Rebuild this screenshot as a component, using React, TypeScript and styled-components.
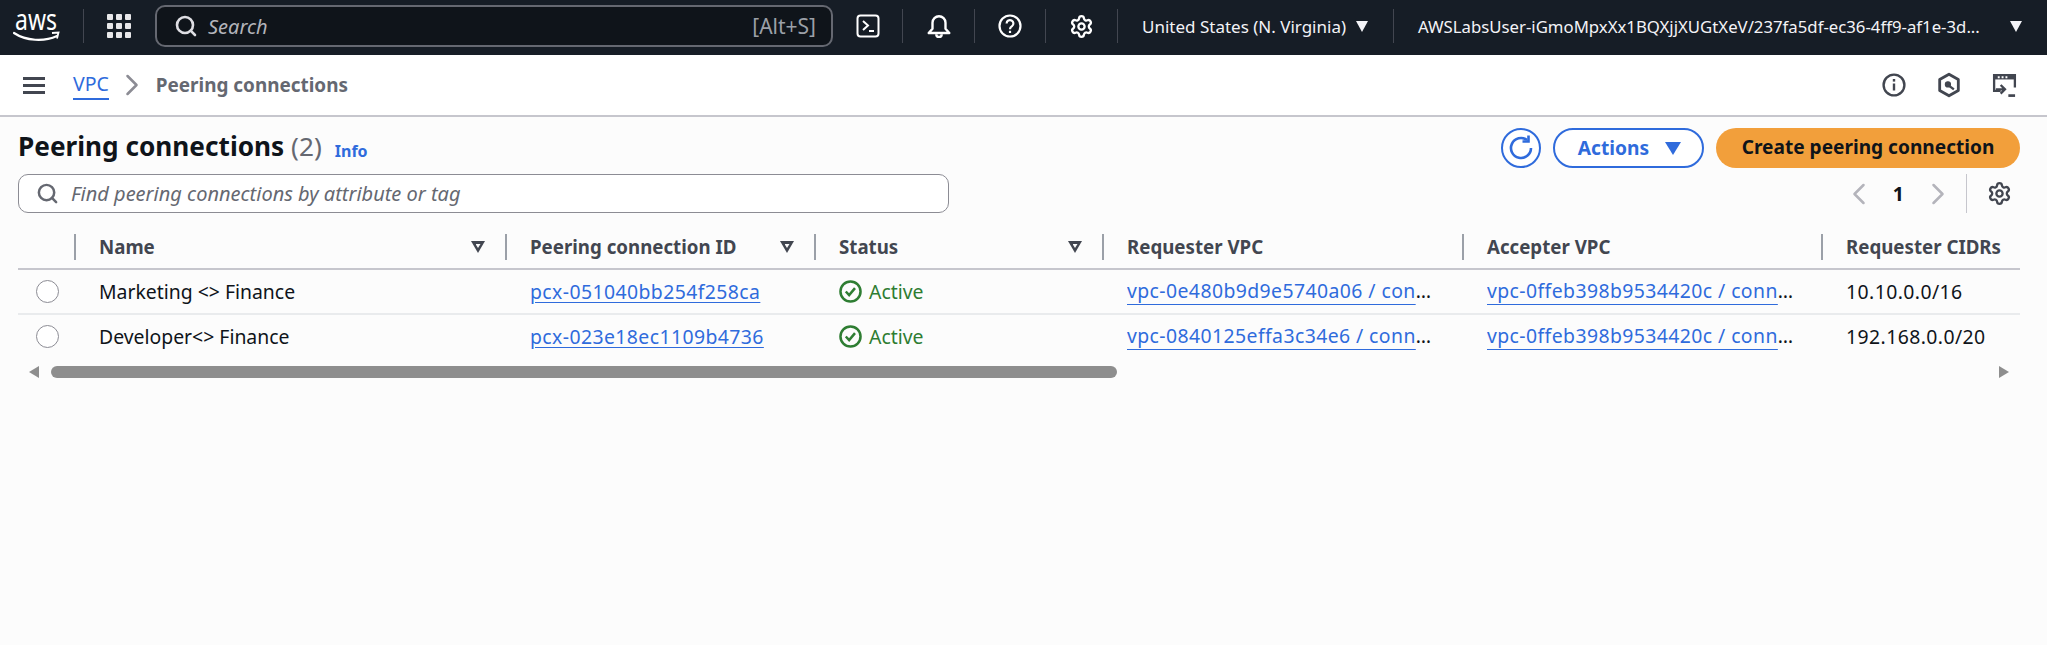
import React from "react";
import styled, { createGlobalStyle } from "styled-components";
import { ChevronLeft, ChevronRight, Search, Settings } from "lucide-react";

const FONT = `"Noto Sans", "Open Sans", Arial, sans-serif`;

const GlobalStyle = createGlobalStyle`
  html, body {
    margin: 0;
    height: 645px;
    overflow: hidden;
    background: #fcfcfc;
    font-family: ${FONT};
    color: #0f141a;
  }
  * { box-sizing: border-box; }
`;

interface Connection {
  name: string;
  id: string;
  requester: string;
  accepter: string;
  cidr: string;
}

const connections: Connection[] = [
  {
    name: "Marketing <> Finance",
    id: "pcx-051040bb254f258ca",
    requester: "vpc-0e480b9d9e5740a06 / connection-requester",
    accepter: "vpc-0ffeb398b9534420c / connection-accepter",
    cidr: "10.10.0.0/16",
  },
  {
    name: "Developer<> Finance",
    id: "pcx-023e18ec1109b4736",
    requester: "vpc-0840125effa3c34e6 / connection-requester",
    accepter: "vpc-0ffeb398b9534420c / connection-accepter",
    cidr: "192.168.0.0/20",
  },
];

const COLUMNS = "56px 431px 309px 288px 360px 359px 199px";

export default function App() {
  return (
    <>
      <GlobalStyle />
      <TopNav>
        <Logo>
          <svg width="48" height="30" viewBox="0 0 48 30">
            <text
              x="2"
              y="13"
              transform="scale(1 1.3)"
              fontFamily="Noto Sans, sans-serif"
              fontSize="23"
              fill="#fff"
            >
              aws
            </text>
            <path d="M1 20c12 8 30 9 43 3" fill="none" stroke="#fff" strokeWidth="2.2" strokeLinecap="round" />
            <path d="M39 20l6.500-.5-1.500 6" fill="none" stroke="#fff" strokeWidth="1.800" />
          </svg>
        </Logo>
        <NavDivider />
        <GridIcon>
          {Array.from({ length: 9 }).map((_, i) => (
            <i key={i} />
          ))}
        </GridIcon>
        <SearchBox>
          <Search size={24} strokeWidth={2.6} color="#dedee3" />
          <SearchText>Search</SearchText>
          <Shortcut>[Alt+S]</Shortcut>
        </SearchBox>
        <IconSlot $width={69}>
          <svg width="24" height="24" viewBox="0 0 24 24" fill="none" stroke="#fff" strokeWidth="2">
            <rect x="1.500" y="1.500" width="21" height="21" rx="3" />
            <path d="M7 7l5 4.500-5 4.500M13 17h5" />
          </svg>
        </IconSlot>
        <NavDivider />
        <IconSlot $width={71}>
          <svg width="26" height="26" viewBox="0 0 24 24" fill="none" stroke="#fff" strokeWidth="2.2" strokeLinejoin="round">
            <path d="M2.500 18.500h19l-3.500-4V9a6 6 0 0 0-12 0v5.500z" />
            <path d="M9.500 19.500a2.500 2.500 0 0 0 5 0" />
          </svg>
        </IconSlot>
        <NavDivider />
        <IconSlot $width={70}>
          <svg width="24" height="24" viewBox="0 0 24 24" fill="none" stroke="#fff" strokeWidth="2.2">
            <circle cx="12" cy="12" r="10.500" />
            <path d="M8.600 9.400a3.400 3.400 0 1 1 5.400 2.800c-1.200.8-2 1.400-2 3" />
            <path d="M12 16.800v2.200" />
          </svg>
        </IconSlot>
        <NavDivider />
        <IconSlot $width={71}>
          <Settings size={25} strokeWidth={2.2} color="#fff" />
        </IconSlot>
        <NavDivider />
        <NavMenu $width={275} $size={17}>
          United States (N. Virginia)
          <NavCaret />
        </NavMenu>
        <NavDivider />
        <NavMenu $width={653} $size={16.75}>
          AWSLabsUser-iGmoMpxXx1BQXjjXUGtXeV/237fa5df-ec36-4ff9-af1e-3d...
          <NavCaret />
        </NavMenu>
      </TopNav>

      <CrumbBar>
        <Burger>
          <i />
          <i />
          <i />
        </Burger>
        <CrumbLink>VPC</CrumbLink>
        <ChevronRight size={36} strokeWidth={1.7} color="#8c8c94" />
        <CrumbCurrent>Peering connections</CrumbCurrent>
        <CrumbTools>
          <svg width="24" height="24" viewBox="0 0 24 24" fill="none" stroke="#424650" strokeWidth="2.400">
            <circle cx="12" cy="12" r="10.400" />
            <path d="M12 10.500v7" />
            <path d="M12 6v2.600" />
          </svg>
          <svg width="26" height="26" viewBox="0 0 24 24" fill="none" stroke="#424650" strokeWidth="2.600">
            <path d="M12 2l8.600 5v10L12 22l-8.600-5V7z" strokeLinejoin="round" />
            <circle cx="11" cy="11.500" r="2.400" fill="#424650" strokeWidth="1" />
            <path d="M12.500 13l4 3" strokeWidth="2.200" />
          </svg>
          <svg width="25" height="25" viewBox="0 0 26 26" fill="none" stroke="#424650" strokeWidth="2.400">
            <path d="M9 18.500H2.200V2.200h21.600v13" />
            <path d="M2 4.500h22" strokeWidth="4.400" />
            <path d="M9 12.500l4.500 4.500L9 21.500M4 17h9" />
            <path d="M17 23.500h7" strokeWidth="2.800" />
            <path d="M6 4.500h2M10 4.500h2M14 4.500h2" stroke="#fff" strokeWidth="2" />
          </svg>
        </CrumbTools>
      </CrumbBar>

      <Page>
        <TitleRow>
          <Title>
            Peering connections <Count>(2)</Count>
            <InfoLink>Info</InfoLink>
          </Title>
          <Actions>
            <RefreshButton>
              <svg width="28" height="28" viewBox="0 0 28 28" fill="none" stroke="#2f6bdc" strokeWidth="2.600">
                <path d="M24 14a10 10 0 1 1-4-8" />
                <path d="M21.500 1.500v6h-6" />
              </svg>
            </RefreshButton>
            <OutlineButton>
              Actions
              <ButtonCaret />
            </OutlineButton>
            <PrimaryButton>Create peering connection</PrimaryButton>
          </Actions>
        </TitleRow>

        <FilterRow>
          <FilterBox>
            <Search size={23} strokeWidth={2.6} color="#656871" />
            <FilterText>Find peering connections by attribute or tag</FilterText>
          </FilterBox>
          <Pager>
            <ChevronLeft size={36} strokeWidth={1.7} color="#b4b4bb" />
            <PageNumber>1</PageNumber>
            <ChevronRight size={36} strokeWidth={1.7} color="#b4b4bb" />
            <PagerDivider />
            <Settings size={25} strokeWidth={2.2} color="#424650" />
          </Pager>
        </FilterRow>

        <HeaderRow>
          <HeaderCell />
          <HeaderCell $bar>
            Name
            <SortIcon />
          </HeaderCell>
          <HeaderCell $bar>
            Peering connection ID
            <SortIcon />
          </HeaderCell>
          <HeaderCell $bar>
            Status
            <SortIcon />
          </HeaderCell>
          <HeaderCell $bar>Requester VPC</HeaderCell>
          <HeaderCell $bar>Accepter VPC</HeaderCell>
          <HeaderCell $bar>Requester CIDRs</HeaderCell>
        </HeaderRow>

        {connections.map((c, i) => (
          <Row key={c.id} $last={i === connections.length - 1}>
            <RadioCell>
              <Radio />
            </RadioCell>
            <Cell>{c.name}</Cell>
            <Cell $wide>
              <TableLink>{c.id}</TableLink>
            </Cell>
            <Cell>
              <StatusOk>
                <svg width="23" height="23" viewBox="0 0 22 22" fill="none" stroke="#2e7d32" strokeWidth="2.400">
                  <circle cx="11" cy="11" r="9.600" />
                  <path d="M6.500 11l3.200 3.400 5.600-6.600" />
                </svg>
                Active
              </StatusOk>
            </Cell>
            <Cell $wide>
              <Clip>
                <TableLink $offset={6}>{c.requester}</TableLink>
              </Clip>
            </Cell>
            <Cell $wide>
              <Clip>
                <TableLink $offset={6}>{c.accepter}</TableLink>
              </Clip>
            </Cell>
            <Cell $wide>{c.cidr}</Cell>
          </Row>
        ))}

        <ScrollTrack>
          <ArrowLeft />
          <ScrollThumb style={{ width: 1066 }} />
          <ArrowRight />
        </ScrollTrack>
      </Page>
    </>
  );
}

const TopNav = styled.header`
  display: flex;
  align-items: center;
  height: 55px;
  padding: 0 0 3px 13px;
  background: #161d26;
  color: #fff;
`;

const Logo = styled.div`
  width: 70px;
  height: 30px;
  margin-top: 3px;
  flex-shrink: 0;
`;

const NavDivider = styled.span`
  width: 1px;
  height: 34px;
  background: #424650;
  flex-shrink: 0;
`;

const GridIcon = styled.div`
  display: grid;
  grid-template-columns: repeat(3, 6px);
  grid-auto-rows: 6px;
  gap: 3px;
  margin: 0 24px 0 23px;
  flex-shrink: 0;
  > i {
    background: #e8e8ea;
    border-radius: 1px;
  }
`;

const SearchBox = styled.div`
  display: flex;
  align-items: center;
  width: 678px;
  height: 42px;
  padding: 0 15px 0 17px;
  background: #0f141a;
  border: 2px solid #656871;
  border-radius: 10px;
  flex-shrink: 0;
`;

const SearchText = styled.span`
  margin-left: 10px;
  font-size: 20px;
  font-style: italic;
  color: #b4b4bb;
`;

const Shortcut = styled.span`
  margin-left: auto;
  font-size: 21px;
  color: #9ba0a8;
`;

const IconSlot = styled.div<{ $width: number }>`
  display: flex;
  align-items: center;
  justify-content: center;
  width: ${({ $width }) => $width}px;
  flex-shrink: 0;
`;

const NavMenu = styled.div<{ $width: number; $size: number }>`
  display: flex;
  align-items: center;
  width: ${({ $width }) => $width}px;
  padding: 0 25px 0 24px;
  font-size: ${({ $size }) => $size}px;
  white-space: nowrap;
  color: #f3f3f7;
  flex-shrink: 0;
`;

const NavCaret = styled.span`
  width: 0;
  height: 0;
  margin-left: auto;
  border-left: 6px solid transparent;
  border-right: 6px solid transparent;
  border-top: 11px solid #f3f3f7;
`;

const CrumbBar = styled.nav`
  display: flex;
  align-items: center;
  height: 62px;
  padding: 0 30px 0 23px;
  background: #fff;
  border-bottom: 2px solid #c6c6cd;
`;

const Burger = styled.div`
  display: flex;
  flex-direction: column;
  justify-content: space-between;
  width: 22px;
  height: 17px;
  margin-right: 28px;
  > i {
    height: 3px;
    background: #424650;
  }
`;

const CrumbLink = styled.a`
  margin-right: 5px;
  padding-bottom: 1px;
  border-bottom: 2px solid #2f6bdc;
  font-size: 19.5px;
  color: #2f6bdc;
`;

const CrumbCurrent = styled.span`
  margin-left: 6px;
  font-size: 18.9px;
  font-weight: 700;
  color: #656871;
`;

const CrumbTools = styled.div`
  display: flex;
  align-items: center;
  gap: 30px;
  margin-left: auto;
`;

const Page = styled.main`
  padding: 11px 27px 0 18px;
`;

const TitleRow = styled.div`
  display: flex;
  align-items: center;
  justify-content: space-between;
  height: 40px;
`;

const Title = styled.h1`
  margin: 0;
  font-size: 26.2px;
  font-weight: 700;
  line-height: 40px;
  white-space: nowrap;
`;

const Count = styled.span`
  font-weight: 400;
  color: #656871;
`;

const InfoLink = styled.a`
  position: relative;
  top: 1px;
  margin-left: 13px;
  font-size: 16px;
  font-weight: 700;
  color: #2f6bdc;
`;

const Actions = styled.div`
  display: flex;
  align-items: center;
  gap: 12px;
`;

const RefreshButton = styled.button`
  display: flex;
  align-items: center;
  justify-content: center;
  width: 40px;
  height: 40px;
  padding: 0;
  background: #fff;
  border: 2.5px solid #2f6bdc;
  border-radius: 50%;
`;

const OutlineButton = styled.button`
  display: flex;
  align-items: center;
  justify-content: center;
  gap: 16px;
  width: 151px;
  height: 40px;
  padding: 0 0 2px 2px;
  background: #fff;
  border: 2.5px solid #2f6bdc;
  border-radius: 20px;
  font-family: ${FONT};
  font-size: 19.2px;
  font-weight: 700;
  color: #2f6bdc;
`;

const ButtonCaret = styled.span`
  width: 0;
  height: 0;
  margin-top: 2px;
  border-left: 8px solid transparent;
  border-right: 8px solid transparent;
  border-top: 13px solid #2f6bdc;
`;

const PrimaryButton = styled.button`
  width: 304px;
  height: 40px;
  padding: 0 0 2px;
  background: #f29f3b;
  border: 0;
  border-radius: 20px;
  font-family: ${FONT};
  font-size: 19.1px;
  font-weight: 700;
  color: #0f141a;
`;

const FilterRow = styled.div`
  display: flex;
  align-items: center;
  justify-content: space-between;
  margin-top: 6px;
`;

const FilterBox = styled.div`
  display: flex;
  align-items: center;
  width: 931px;
  height: 39px;
  padding-left: 17px;
  background: #fff;
  border: 1px solid #8c8c94;
  border-radius: 10px;
`;

const FilterText = styled.span`
  margin-left: 12px;
  font-size: 20px;
  font-style: italic;
  color: #656871;
`;

const Pager = styled.div`
  display: flex;
  align-items: center;
  height: 39px;
  margin-right: 8px;
`;

const PageNumber = styled.span`
  margin: 0 16px;
  font-size: 19.5px;
  font-weight: 700;
`;

const PagerDivider = styled.span`
  width: 1px;
  height: 39px;
  margin: 0 20px 0 10px;
  background: #c6c6cd;
`;

const HeaderRow = styled.div`
  display: grid;
  grid-template-columns: ${COLUMNS};
  height: 36px;
  margin-top: 21px;
  border-bottom: 2px solid #c6c6cd;
`;

const HeaderCell = styled.div<{ $bar?: boolean }>`
  display: flex;
  align-items: center;
  justify-content: space-between;
  height: 26px;
  padding: 0 20px 2px 25px;
  font-size: 18.7px;
  font-weight: 700;
  white-space: nowrap;
  color: #424650;
  ${({ $bar }) => ($bar ? "border-left: 2.5px solid #9ba0a8; padding-left: 23px;" : "")}
`;

const SortIcon = styled.span`
  position: relative;
  width: 14px;
  height: 12px;
  margin-top: 2px;
  clip-path: polygon(0 0, 100% 0, 50% 100%);
  background: #424650;
  &::after {
    content: "";
    position: absolute;
    left: 4.5px;
    top: 3px;
    width: 5px;
    height: 4px;
    clip-path: polygon(0 0, 100% 0, 50% 100%);
    background: #fcfcfc;
  }
`;

const Row = styled.div<{ $last?: boolean }>`
  display: grid;
  grid-template-columns: ${COLUMNS};
  height: 45px;
  border-bottom: 2px solid ${({ $last }) => ($last ? "transparent" : "#e9ebed")};
`;

const Cell = styled.div<{ $wide?: boolean }>`
  display: flex;
  align-items: center;
  min-width: 0;
  padding: 0 25px 1px;
  font-size: 19.4px;
  white-space: nowrap;
  letter-spacing: ${({ $wide }) => ($wide ? "0.42px" : "0")};
`;

const RadioCell = styled.div`
  display: flex;
  align-items: center;
  padding-left: 18px;
`;

const Radio = styled.span`
  width: 23px;
  height: 23px;
  background: #fff;
  border: 1px solid #8c8c94;
  border-radius: 50%;
`;

const TableLink = styled.a<{ $offset?: number }>`
  color: #2f6bdc;
  text-decoration: underline;
  text-underline-offset: ${({ $offset }) => $offset ?? 3}px;
`;

const Clip = styled.div`
  width: calc(100% + 3px);
  flex-shrink: 0;
  overflow: hidden;
  line-height: 36px;
  text-overflow: ellipsis;
`;

const StatusOk = styled.span`
  display: flex;
  align-items: center;
  gap: 7px;
  color: #2e7d32;
`;

const ScrollTrack = styled.div`
  display: flex;
  align-items: center;
  height: 12px;
  margin-top: 6px;
  padding: 0 11px;
`;

const ArrowLeft = styled.span`
  width: 0;
  height: 0;
  margin-right: 12px;
  border-top: 6px solid transparent;
  border-bottom: 6px solid transparent;
  border-right: 10px solid #8e8e8e;
`;

const ArrowRight = styled.span`
  width: 0;
  height: 0;
  margin-left: auto;
  border-top: 6px solid transparent;
  border-bottom: 6px solid transparent;
  border-left: 10px solid #8e8e8e;
`;

const ScrollThumb = styled.span`
  height: 12px;
  background: #8e8e8e;
  border-radius: 6px;
`;
